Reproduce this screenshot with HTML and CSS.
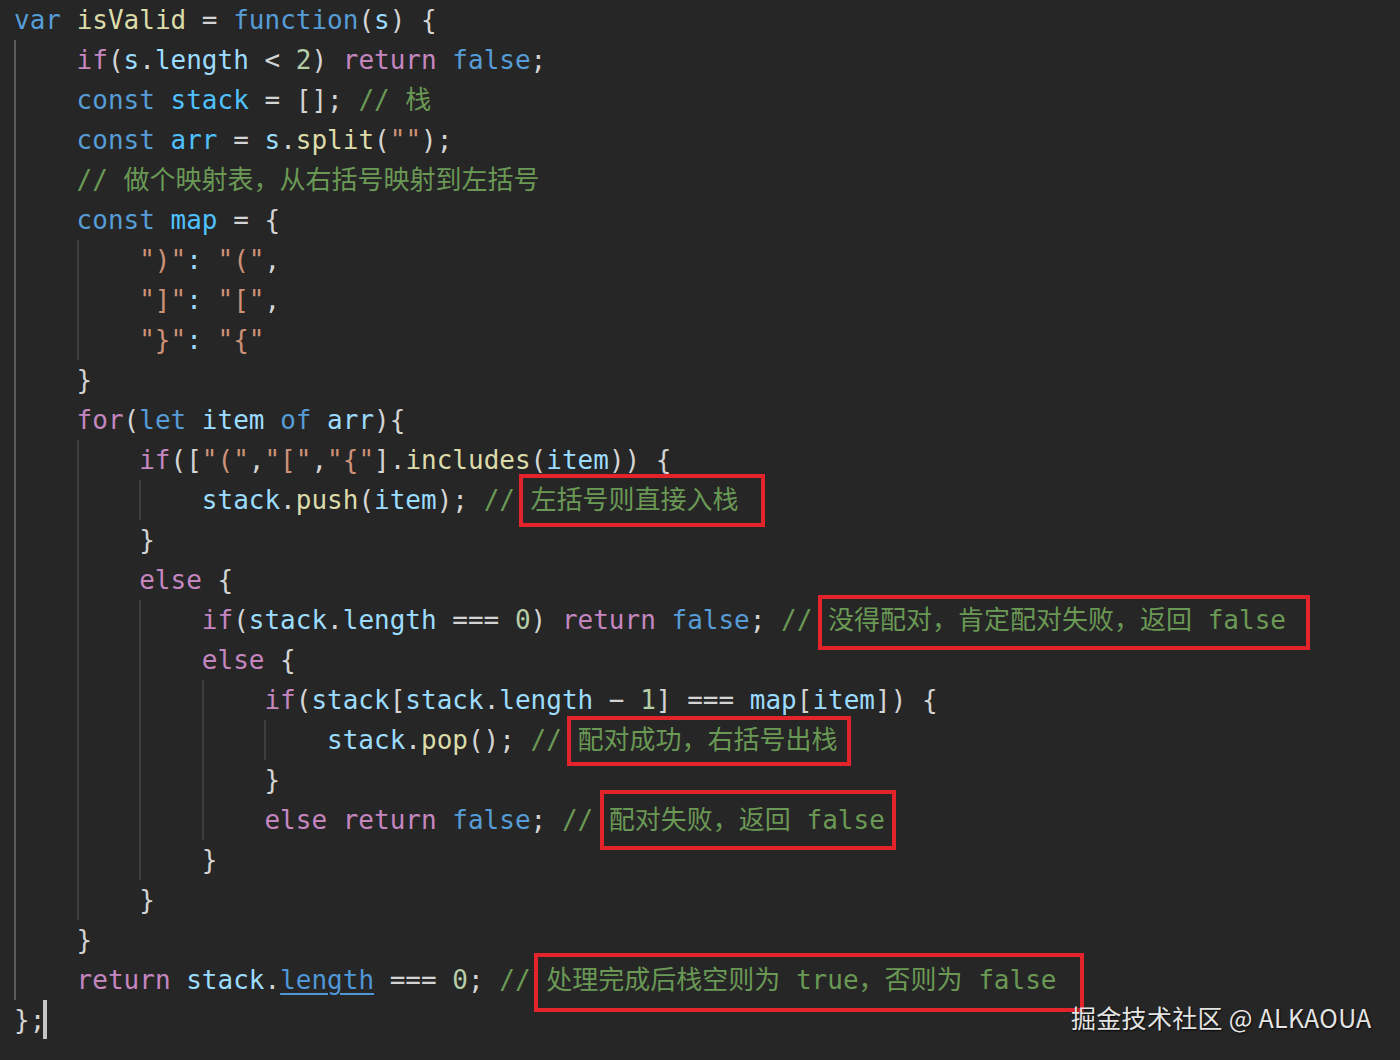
FILE: index.html
```html
<!DOCTYPE html>
<html lang="zh">
<head>
<meta charset="utf-8">
<title>isValid</title>
<link rel="stylesheet" href="styles.css">
</head>
<body>
<div class="editor">
  <div class="ln"><span class="code"><span class="k">var</span> <span class="f">isValid</span> = <span class="k">function</span>(<span class="v">s</span>) {</span></div>
  <div class="ln"><span class="i g0"></span><span class="code"><span class="c">if</span>(<span class="v">s</span>.<span class="v">length</span> &lt; <span class="n">2</span>) <span class="c">return</span> <span class="k">false</span>;</span></div>
  <div class="ln"><span class="i g0"></span><span class="code"><span class="k">const</span> <span class="cv">stack</span> = []; <span class="cm">// 栈</span></span></div>
  <div class="ln"><span class="i g0"></span><span class="code"><span class="k">const</span> <span class="cv">arr</span> = <span class="v">s</span>.<span class="f">split</span>(<span class="s">""</span>);</span></div>
  <div class="ln"><span class="i g0"></span><span class="code"><span class="cm">// 做个映射表，从右括号映射到左括号</span></span></div>
  <div class="ln"><span class="i g0"></span><span class="code"><span class="k">const</span> <span class="cv">map</span> = {</span></div>
  <div class="ln"><span class="i g0"></span><span class="i g"></span><span class="code"><span class="s">")"</span><span class="v">:</span> <span class="s">"("</span>,</span></div>
  <div class="ln"><span class="i g0"></span><span class="i g"></span><span class="code"><span class="s">"]"</span><span class="v">:</span> <span class="s">"["</span>,</span></div>
  <div class="ln"><span class="i g0"></span><span class="i g"></span><span class="code"><span class="s">"}"</span><span class="v">:</span> <span class="s">"{"</span></span></div>
  <div class="ln"><span class="i g0"></span><span class="code">}</span></div>
  <div class="ln"><span class="i g0"></span><span class="code"><span class="c">for</span>(<span class="k">let</span> <span class="v">item</span> <span class="k">of</span> <span class="v">arr</span>){</span></div>
  <div class="ln"><span class="i g0"></span><span class="i g"></span><span class="code"><span class="c">if</span>([<span class="s">"("</span>,<span class="s">"["</span>,<span class="s">"{"</span>].<span class="f">includes</span>(<span class="v">item</span>)) {</span></div>
  <div class="ln"><span class="i g0"></span><span class="i g"></span><span class="i g"></span><span class="code"><span class="v">stack</span>.<span class="f">push</span>(<span class="v">item</span>); <span class="cm">// <span class="note n1">左括号则直接入栈</span></span></span></div>
  <div class="ln"><span class="i g0"></span><span class="i g"></span><span class="code">}</span></div>
  <div class="ln"><span class="i g0"></span><span class="i g"></span><span class="code"><span class="c">else</span> {</span></div>
  <div class="ln"><span class="i g0"></span><span class="i g"></span><span class="i g"></span><span class="code"><span class="c">if</span>(<span class="v">stack</span>.<span class="v">length</span> === <span class="n">0</span>) <span class="c">return</span> <span class="k">false</span>; <span class="cm">// <span class="note n2">没得配对，肯定配对失败，返回 false</span></span></span></div>
  <div class="ln"><span class="i g0"></span><span class="i g"></span><span class="i g"></span><span class="code"><span class="c">else</span> {</span></div>
  <div class="ln"><span class="i g0"></span><span class="i g"></span><span class="i g"></span><span class="i g"></span><span class="code"><span class="c">if</span>(<span class="v">stack</span>[<span class="v">stack</span>.<span class="v">length</span> − <span class="n">1</span>] === <span class="v">map</span>[<span class="v">item</span>]) {</span></div>
  <div class="ln"><span class="i g0"></span><span class="i g"></span><span class="i g"></span><span class="i g"></span><span class="i g"></span><span class="code"><span class="v">stack</span>.<span class="f">pop</span>(); <span class="cm">// <span class="note n3">配对成功，右括号出栈</span></span></span></div>
  <div class="ln"><span class="i g0"></span><span class="i g"></span><span class="i g"></span><span class="i g"></span><span class="code">}</span></div>
  <div class="ln"><span class="i g0"></span><span class="i g"></span><span class="i g"></span><span class="i g"></span><span class="code"><span class="c">else</span> <span class="c">return</span> <span class="k">false</span>; <span class="cm">// <span class="note n4">配对失败，返回 false</span></span></span></div>
  <div class="ln"><span class="i g0"></span><span class="i g"></span><span class="i g"></span><span class="code">}</span></div>
  <div class="ln"><span class="i g0"></span><span class="i g"></span><span class="code">}</span></div>
  <div class="ln"><span class="i g0"></span><span class="code">}</span></div>
  <div class="ln"><span class="i g0"></span><span class="code"><span class="c">return</span> <span class="v">stack</span>.<span class="u">length</span> === <span class="n">0</span>; <span class="cm">// <span class="note n5">处理完成后栈空则为 true，否则为 false</span></span></span></div>
  <div class="ln"><span class="code">};<span class="cursor"></span></span></div>
  <div class="wm">掘金技术社区 @ ALKAOUA</div>
</div>
</body>
</html>
```

FILE: styles.css
```css
html, body {
  margin: 0;
  padding: 0;
  background: #262626;
}

.editor {
  position: relative;
  height: 1060px;
  overflow: hidden;
  padding-left: 14px;
  font-family: "DejaVu Sans Mono", "Noto Sans CJK SC", monospace;
  font-size: 26px;
  color: #d4d4d4;
}

.ln {
  display: flex;
  height: 40px;
  line-height: 40px;
}

.i {
  flex: none;
  width: 4ch;
  box-sizing: border-box;
}

.g0 {
  border-left: 2px solid #5c5c5c;
}

.g {
  border-left: 2px solid #3e3e3e;
}

.code {
  white-space: pre;
}

.k { color: #569cd6; }
.c { color: #c586c0; }
.f { color: #dcdcaa; }
.v { color: #9cdcfe; }
.cv { color: #4fc1ff; }
.n { color: #b5cea8; }
.s { color: #ce9178; }
.cm { color: #6a9955; }
.u {
  color: #4f97d7;
  text-decoration: underline;
  text-underline-offset: 4px;
  text-decoration-thickness: 2px;
}

.note {
  position: relative;
  display: inline-block;
  height: 40px;
  line-height: 40px;
  vertical-align: top;
}

.note::after {
  content: "";
  position: absolute;
  border: 4px solid #e3242b;
}

.n1::after { left: -12px; right: -26px; top: -6px; bottom: -7px; }
.n2::after { left: -10px; right: -24px; top: -5px; bottom: -10px; }
.n3::after { left: -11px; right: -13px; top: -4px; bottom: -6px; }
.n4::after { left: -9px; right: -11px; top: -10px; bottom: -10px; }
.n5::after { left: -12px; right: -28px; top: -7px; bottom: -12px; }

.cursor {
  display: inline-block;
  width: 4px;
  height: 39px;
  margin-left: -2px;
  vertical-align: top;
  background: #c4c4c4;
}

.wm {
  position: absolute;
  left: 1071px;
  top: 999px;
  font-family: "Noto Sans CJK SC", "Noto Sans", sans-serif;
  font-size: 25px;
  letter-spacing: 0.3px;
  line-height: 36px;
  color: #e4e4e4;
  text-shadow: 1px 1px 2px rgba(0, 0, 0, 0.85);
  white-space: nowrap;
}
```
